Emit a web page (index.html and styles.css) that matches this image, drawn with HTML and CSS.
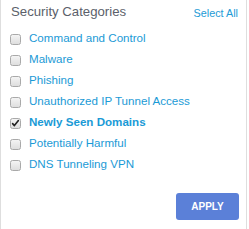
FILE: index.html
```html
<!DOCTYPE html>
<html>
<head>
<meta charset="utf-8">
<link rel="stylesheet" href="styles.css">
</head>
<body>
<div class="panel">
  <div class="header">
    <span class="title">Security Categories</span>
    <a class="select-all">Select All</a>
  </div>
  <ul class="list">
    <li class="row"><span class="cb"></span><span class="label">Command and Control</span></li>
    <li class="row"><span class="cb"></span><span class="label">Malware</span></li>
    <li class="row"><span class="cb"></span><span class="label">Phishing</span></li>
    <li class="row"><span class="cb"></span><span class="label">Unauthorized IP Tunnel Access</span></li>
    <li class="row"><span class="cb checked"><svg viewBox="0 0 11 11" width="11" height="11"><path d="M2.6 5.6 L4.4 7.6 L8.4 2.6" fill="none" stroke="#222" stroke-width="1.6" stroke-linecap="round" stroke-linejoin="round"/></svg></span><span class="label bold">Newly Seen Domains</span></li>
    <li class="row"><span class="cb"></span><span class="label">Potentially Harmful</span></li>
    <li class="row"><span class="cb"></span><span class="label">DNS Tunneling VPN</span></li>
  </ul>
  <div class="footer">
    <button class="apply">APPLY</button>
  </div>
</div>
</body>
</html>
```

FILE: styles.css
```css
html, body {
  margin: 0;
  padding: 0;
  background: #fff;
}
body {
  font-family: "Liberation Sans", Arial, sans-serif;
}
.panel {
  width: 247px;
  height: 229px;
  border-left: 1px solid #dedede;
  border-right: 1px solid #dedede;
  box-sizing: border-box;
}
.header {
  display: flex;
  justify-content: space-between;
  align-items: flex-start;
  padding: 4px 8px 0 10px;
  height: 15px;
}
.title {
  font-size: 13.2px;
  line-height: 15px;
  color: #5b5f6a;
}
.select-all {
  font-size: 10.8px;
  line-height: 13px;
  margin-top: 3px;
  color: #1d9bd6;
  cursor: pointer;
}
.list {
  list-style: none;
  margin: 8px 0 0 0;
  padding: 0;
}
.row {
  display: flex;
  align-items: center;
  height: 21px;
  padding-left: 9px;
}
.cb {
  width: 11px;
  height: 11px;
  box-sizing: border-box;
  border: 1px solid #a9a9a9;
  border-radius: 2.5px;
  background: linear-gradient(#f4f4f4, #dedede);
  margin-top: 3px;
  margin-right: 8px;
  display: flex;
  align-items: center;
  justify-content: center;
  flex: none;
}
.cb svg {
  display: block;
  margin: -1px;
}
.label {
  font-size: 11.6px;
  color: #1a9ad6;
  line-height: 14px;
}
.label.bold {
  font-weight: bold;
}
.footer {
  display: flex;
  justify-content: flex-end;
  padding-right: 7px;
  margin-top: 19px;
}
.apply {
  width: 63px;
  height: 27px;
  border: none;
  border-radius: 3px;
  background: #5b80d8;
  color: #fff;
  font-family: "Liberation Sans", Arial, sans-serif;
  font-weight: bold;
  font-size: 10px;
  padding: 0;
}
```
